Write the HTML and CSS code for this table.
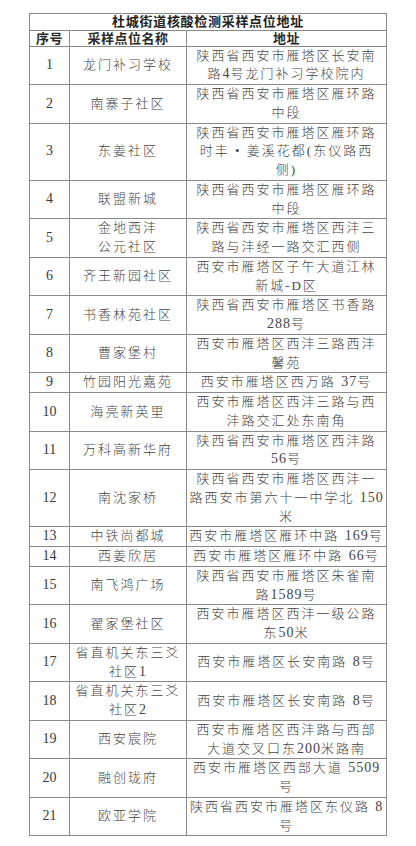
FILE: index.html
```html
<!DOCTYPE html>
<html lang="zh-CN">
<head>
<meta charset="utf-8">
<title>杜城街道核酸检测采样点位地址</title>
<link rel="stylesheet" href="styles.css">
</head>
<body>
<table class="sites">
  <colgroup>
    <col class="c-no">
    <col class="c-name">
    <col class="c-addr">
  </colgroup>
  <thead>
    <tr class="title-row"><th colspan="3">杜城街道核酸检测采样点位地址</th></tr>
    <tr class="head-row"><th>序号</th><th>采样点位名称</th><th>地址</th></tr>
  </thead>
  <tbody>
    <tr><td class="no">1</td><td>龙门补习学校</td><td>陕西省西安市雁塔区长安南<br>路<span class="d">4</span>号龙门补习学校院内</td></tr>
    <tr><td class="no">2</td><td>南寨子社区</td><td>陕西省西安市雁塔区雁环路<br>中段</td></tr>
    <tr><td class="no">3</td><td>东姜社区</td><td>陕西省西安市雁塔区雁环路<br>时丰 • 姜溪花都(东仪路西<br>侧)</td></tr>
    <tr><td class="no">4</td><td>联盟新城</td><td>陕西省西安市雁塔区雁环路<br>中段</td></tr>
    <tr><td class="no">5</td><td>金地西沣<br>公元社区</td><td>陕西省西安市雁塔区西沣三<br>路与沣经一路交汇西侧</td></tr>
    <tr><td class="no">6</td><td>齐王新园社区</td><td>西安市雁塔区子午大道江林<br>新城-D区</td></tr>
    <tr><td class="no">7</td><td>书香林苑社区</td><td>陕西省西安市雁塔区书香路<br><span class="d">288</span>号</td></tr>
    <tr><td class="no">8</td><td>曹家堡村</td><td>西安市雁塔区西沣三路西沣<br>馨苑</td></tr>
    <tr><td class="no">9</td><td>竹园阳光嘉苑</td><td>西安市雁塔区西万路 <span class="d">37</span>号</td></tr>
    <tr><td class="no">10</td><td>海亮新英里</td><td>西安市雁塔区西沣三路与西<br>沣路交汇处东南角</td></tr>
    <tr><td class="no">11</td><td>万科高新华府</td><td>陕西省西安市雁塔区西沣路<br><span class="d">56</span>号</td></tr>
    <tr><td class="no">12</td><td>南沈家桥</td><td>陕西省西安市雁塔区西沣一<br>路西安市第六十一中学北 <span class="d">150</span><br>米</td></tr>
    <tr><td class="no">13</td><td>中铁尚都城</td><td>西安市雁塔区雁环中路 <span class="d">169</span>号</td></tr>
    <tr><td class="no">14</td><td>西姜欣居</td><td>西安市雁塔区雁环中路 <span class="d">66</span>号</td></tr>
    <tr><td class="no">15</td><td>南飞鸿广场</td><td>陕西省西安市雁塔区朱雀南<br>路<span class="d">1589</span>号</td></tr>
    <tr><td class="no">16</td><td>翟家堡社区</td><td>西安市雁塔区西沣一级公路<br>东<span class="d">50</span>米</td></tr>
    <tr><td class="no">17</td><td>省直机关东三爻<br>社区<span class="d">1</span></td><td>西安市雁塔区长安南路 <span class="d">8</span>号</td></tr>
    <tr><td class="no">18</td><td>省直机关东三爻<br>社区<span class="d">2</span></td><td>西安市雁塔区长安南路 <span class="d">8</span>号</td></tr>
    <tr><td class="no">19</td><td>西安宸院</td><td>西安市雁塔区西沣路与西部<br>大道交叉口东<span class="d">200</span>米路南</td></tr>
    <tr><td class="no">20</td><td>融创珑府</td><td>西安市雁塔区西部大道 <span class="d">5509</span><br>号</td></tr>
    <tr><td class="no">21</td><td>欧亚学院</td><td>陕西省西安市雁塔区东仪路 <span class="d">8</span><br>号</td></tr>
  </tbody>
</table>
</body>
</html>
```

FILE: styles.css
```css
html, body {
  margin: 0;
  padding: 0;
  background: #ffffff;
}

.sites {
  margin: 13px 0 0 29px;
  width: 357px;
  border-collapse: collapse;
  table-layout: fixed;
  font-family: "Liberation Serif", "Noto Sans CJK SC", serif;
  color: #454545;
}

.c-no { width: 40px; }
.c-name { width: 117px; }
.c-addr { width: 200px; }

.sites th,
.sites td {
  border: 1px solid #8a8a8a;
  padding: 0;
  text-align: center;
  vertical-align: middle;
  white-space: nowrap;
  overflow: hidden;
}

.sites td {
  font-size: 13px;
  line-height: 18.75px;
  letter-spacing: 2px;
  font-weight: 300;
}

.sites td .d {
  font-size: 14px;
  letter-spacing: 1px;
}

.sites td.no {
  font-size: 14px;
  letter-spacing: 0;
  font-weight: 400;
  color: #3a3a3a;
}

.title-row th {
  font-size: 13px;
  line-height: 15.7px;
  letter-spacing: 0.7px;
  font-weight: 700;
  color: #222222;
}

.head-row th {
  font-size: 13px;
  line-height: 15px;
  letter-spacing: 0.5px;
  font-weight: 700;
  color: #2a2a2a;
}
```
